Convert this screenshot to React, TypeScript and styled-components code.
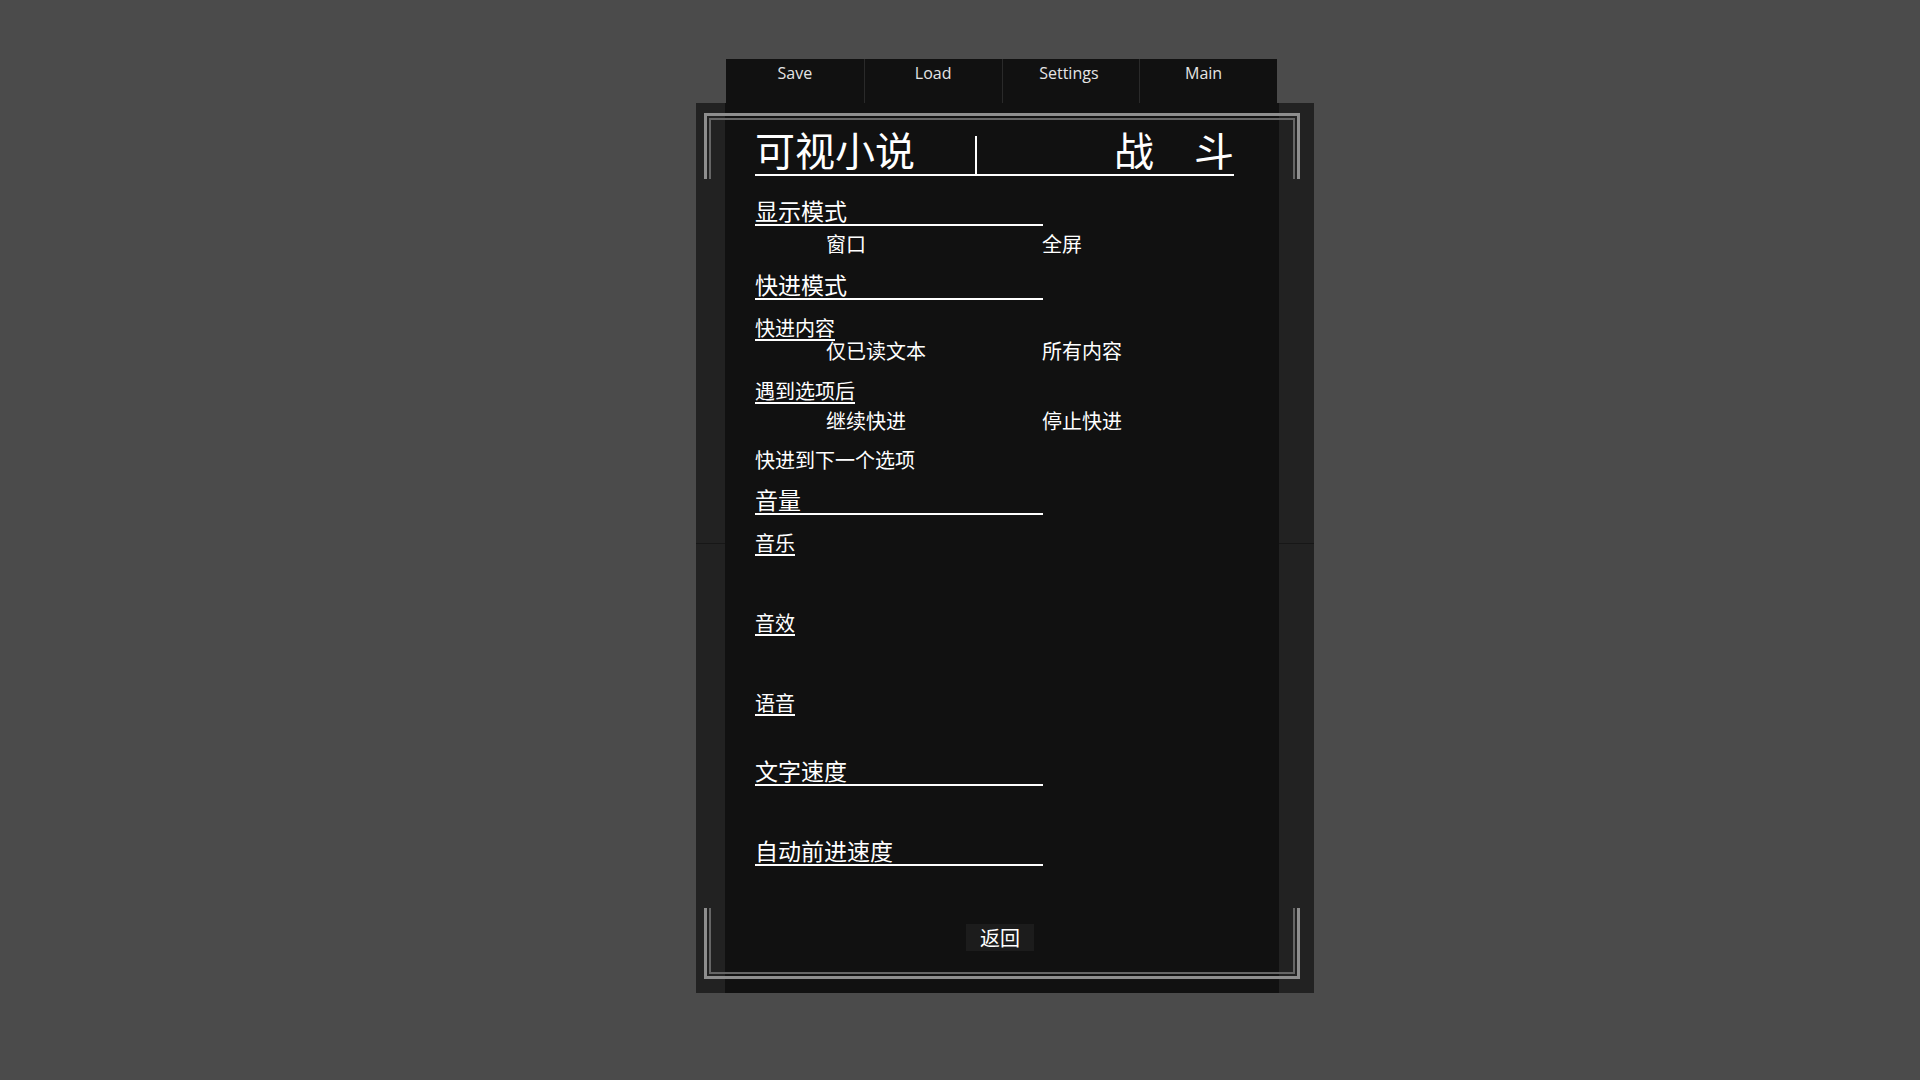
import React from "react";
import styled, { createGlobalStyle } from "styled-components";

const GlobalStyle = createGlobalStyle`
  html, body {
    margin: 0;
    padding: 0;
    background: #4b4b4b;
  }
  body {
    font-family: "Noto Sans CJK SC", "Noto Sans", sans-serif;
  }
`;

const Stage = styled.div`
  width: 1920px;
  height: 1080px;
  box-sizing: border-box;
  padding: 59px 0 0 696px;
  display: flex;
  flex-direction: column;
  align-items: flex-start;
  overflow: hidden;
`;

const TabBar = styled.nav`
  margin-left: 30px;
  width: 551px;
  height: 44px;
  background: #111;
  display: grid;
  grid-template-columns: repeat(4, 1fr);
`;

const Tab = styled.div<{ $shift?: number }>`
  font-family: "Open Sans", "Noto Sans", sans-serif;
  font-size: 16px;
  line-height: 20px;
  color: #e4e4e4;
  text-align: center;
  padding-top: 4px;
  padding-right: ${(p) => p.$shift ?? 0}px;
  & + & {
    border-left: 1px solid #2a2a2a;
  }
`;

const Panel = styled.div`
  position: relative;
  width: 618px;
  height: 890px;
  display: grid;
  grid-template-columns: 29px 554px 35px;
  background: #222;
`;

const Strip = styled.div`
  display: flex;
  flex-direction: column;
`;

const StripTop = styled.div`
  height: 440px;
  border-bottom: 1px solid #171717;
`;

const Column = styled.div`
  background: #111;
  padding: 26px 0 0 30px;
  display: flex;
  flex-direction: column;
  align-items: flex-start;
  color: #fff;
`;

const TitleRow = styled.div`
  width: 479px;
  display: flex;
  align-items: flex-end;
  font-size: 40px;
  line-height: 40px;
  padding-bottom: 5px;
  border-bottom: 2px solid #fff;
`;

const TitleBar = styled.span`
  width: 2px;
  height: 38px;
  background: #fff;
  margin-left: 60px;
  margin-bottom: -5px;
`;

const TitleRight = styled.span`
  margin-left: auto;
  white-space: pre;
`;

const SectionHeader = styled.div<{ $mt: number }>`
  width: 288px;
  margin-top: ${(p) => p.$mt}px;
  font-size: 23px;
  line-height: 23px;
  padding-bottom: 2.5px;
  border-bottom: 2px solid #fff;
  white-space: nowrap;
`;

const SubLabel = styled.div<{ $mt: number }>`
  margin-top: ${(p) => p.$mt}px;
  font-size: 20px;
  line-height: 20px;
  padding-bottom: 1px;
  border-bottom: 2px solid #fff;
`;

const PlainLabel = styled.div<{ $mt: number }>`
  margin-top: ${(p) => p.$mt}px;
  font-size: 20px;
  line-height: 20px;
`;

const OptionRow = styled.div<{ $mt: number }>`
  margin-top: ${(p) => p.$mt}px;
  display: grid;
  grid-template-columns: 287px auto;
  font-size: 20px;
  line-height: 20px;
`;

const Option = styled.span<{ $indent?: number }>`
  padding-left: ${(p) => p.$indent ?? 0}px;
`;

const BackButton = styled.button`
  margin-top: 58px;
  margin-left: 211px;
  width: 68px;
  height: 27px;
  padding: 0;
  border: none;
  background: #1c1c1c;
  color: #fff;
  font-family: "Noto Sans CJK SC", sans-serif;
  font-size: 20px;
  line-height: 27px;
  text-align: center;
`;

const Bracket = styled.div<{ $side: "top" | "bottom" }>`
  position: absolute;
  left: 8px;
  width: 596px;
  top: ${(p) => (p.$side === "top" ? 10 : 805)}px;
  height: ${(p) => (p.$side === "top" ? 66 : 71)}px;
  box-sizing: border-box;
  border: 3px solid #8e8e8e;
  border-${(p) => (p.$side === "top" ? "bottom" : "top")}: none;
  pointer-events: none;
  &::after {
    content: "";
    position: absolute;
    left: 2px;
    right: 2px;
    top: ${(p) => (p.$side === "top" ? 2 : 0)}px;
    bottom: ${(p) => (p.$side === "top" ? 0 : 2)}px;
    border: 2px solid #666;
    border-${(p) => (p.$side === "top" ? "bottom" : "top")}: none;
  }
`;

export default function App() {
  return (
    <>
      <GlobalStyle />
      <Stage>
        <TabBar>
          <Tab>Save</Tab>
          <Tab>Load</Tab>
          <Tab $shift={4}>Settings</Tab>
          <Tab $shift={10}>Main</Tab>
        </TabBar>
        <Panel>
          <Strip>
            <StripTop />
          </Strip>
          <Column>
            <TitleRow>
              <span>可视小说</span>
              <TitleBar />
              <TitleRight>战　斗</TitleRight>
            </TitleRow>

            <SectionHeader $mt={22.5}>显示模式</SectionHeader>
            <OptionRow $mt={8}>
              <Option $indent={71}>窗口</Option>
              <Option>全屏</Option>
            </OptionRow>

            <SectionHeader $mt={18.5}>快进模式</SectionHeader>
            <SubLabel $mt={18}>快进内容</SubLabel>
            <OptionRow $mt={0}>
              <Option $indent={71}>仅已读文本</Option>
              <Option>所有内容</Option>
            </OptionRow>
            <SubLabel $mt={20}>遇到选项后</SubLabel>
            <OptionRow $mt={7}>
              <Option $indent={71}>继续快进</Option>
              <Option>停止快进</Option>
            </OptionRow>
            <PlainLabel $mt={19}>快进到下一个选项</PlainLabel>

            <SectionHeader $mt={17.5}>音量</SectionHeader>
            <SubLabel $mt={18}>音乐</SubLabel>
            <SubLabel $mt={57}>音效</SubLabel>
            <SubLabel $mt={57}>语音</SubLabel>

            <SectionHeader $mt={42.5}>文字速度</SectionHeader>
            <SectionHeader $mt={52.5}>自动前进速度</SectionHeader>

            <BackButton>返回</BackButton>
          </Column>
          <Strip>
            <StripTop />
          </Strip>
          <Bracket $side="top" />
          <Bracket $side="bottom" />
        </Panel>
      </Stage>
    </>
  );
}
